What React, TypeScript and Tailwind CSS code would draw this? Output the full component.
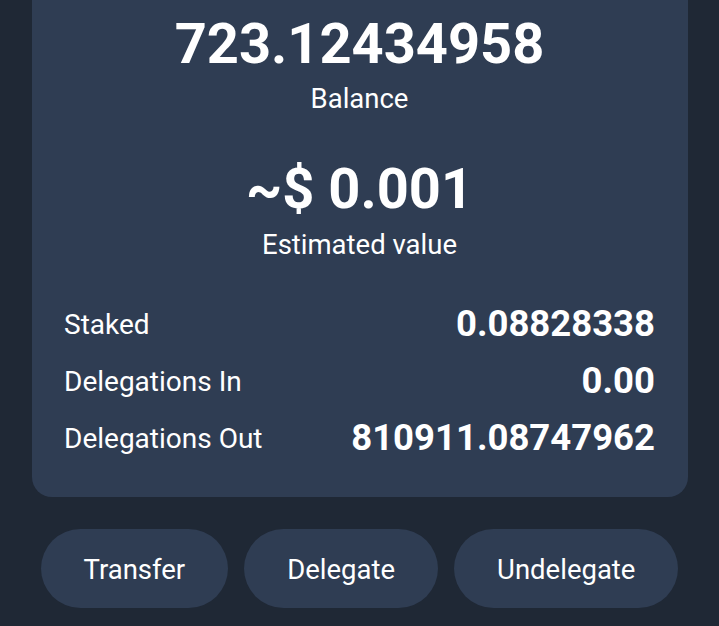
const stats = [
  { label: "Staked", value: "0.08828338" },
  { label: "Delegations In", value: "0.00" },
  { label: "Delegations Out", value: "810911.08747962" },
]

const actions = ["Transfer", "Delegate", "Undelegate"]

export default function App() {
  return (
    <div className="min-h-screen bg-[#1f2835] font-['Roboto',sans-serif] text-white">
      <div className="ml-8 mr-[31px] rounded-b-[20px] bg-[#2f3d53] pl-[32px] pr-[33px] pt-[16px] pb-[30px]">
        <div className="flex flex-col items-center">
          <div className="text-[56px] font-bold leading-none">723.12434958</div>
          <div className="mt-[13px] text-[27.5px] leading-none">Balance</div>
          <div className="mt-[48px] text-[56px] font-bold leading-none">~$ 0.001</div>
          <div className="mt-[14px] text-[27.5px] leading-none">Estimated value</div>
        </div>

        <div className="mt-[38px] flex flex-col">
          {stats.map((s) => (
            <div key={s.label} className="flex h-[57px] items-center justify-between">
              <span className="text-[28px] leading-none">{s.label}</span>
              <span className="text-[36.5px] font-bold leading-none">{s.value}</span>
            </div>
          ))}
        </div>
      </div>

      <div className="mt-[32px] flex justify-center gap-4">
        {actions.map((a) => (
          <button
            key={a}
            className="flex h-[79px] items-center rounded-full bg-[#2f3d53] px-[43px] pt-[3px] text-[27.5px] leading-none text-white"
          >
            {a}
          </button>
        ))}
      </div>
    </div>
  )
}
